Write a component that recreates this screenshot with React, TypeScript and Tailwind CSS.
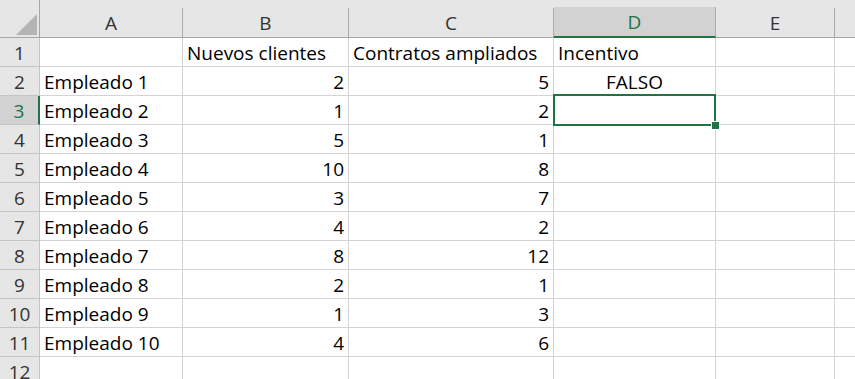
import React from "react";

const cols = [
  { name: "A", w: 143 },
  { name: "B", w: 166 },
  { name: "C", w: 205 },
  { name: "D", w: 162 },
  { name: "E", w: 119 },
  { name: "", w: 60 },
];

type Cell = { v: string; align: "l" | "r" | "c" };

const rows: Cell[][] = [
  [
    { v: "", align: "l" },
    { v: "Nuevos clientes", align: "l" },
    { v: "Contratos ampliados", align: "l" },
    { v: "Incentivo", align: "l" },
  ],
  [
    { v: "Empleado 1", align: "l" },
    { v: "2", align: "r" },
    { v: "5", align: "r" },
    { v: "FALSO", align: "c" },
  ],
  [
    { v: "Empleado 2", align: "l" },
    { v: "1", align: "r" },
    { v: "2", align: "r" },
  ],
  [
    { v: "Empleado 3", align: "l" },
    { v: "5", align: "r" },
    { v: "1", align: "r" },
  ],
  [
    { v: "Empleado 4", align: "l" },
    { v: "10", align: "r" },
    { v: "8", align: "r" },
  ],
  [
    { v: "Empleado 5", align: "l" },
    { v: "3", align: "r" },
    { v: "7", align: "r" },
  ],
  [
    { v: "Empleado 6", align: "l" },
    { v: "4", align: "r" },
    { v: "2", align: "r" },
  ],
  [
    { v: "Empleado 7", align: "l" },
    { v: "8", align: "r" },
    { v: "12", align: "r" },
  ],
  [
    { v: "Empleado 8", align: "l" },
    { v: "2", align: "r" },
    { v: "1", align: "r" },
  ],
  [
    { v: "Empleado 9", align: "l" },
    { v: "1", align: "r" },
    { v: "3", align: "r" },
  ],
  [
    { v: "Empleado 10", align: "l" },
    { v: "4", align: "r" },
    { v: "6", align: "r" },
  ],
  [],
];

const SEL_ROW = 2; // index -> row 3
const SEL_COL = 3; // D

export default function App() {
  return (
    <div
      className="w-[855px] h-[379px] overflow-hidden bg-white text-[19px] text-black"
      style={{ fontFamily: '"Open Sans", "Noto Sans", sans-serif' }}
    >
      {/* header row */}
      <div className="flex h-[38px] bg-[#e6e6e6] border-b border-[#a6a6a6]">
        <div className="w-[40px] shrink-0 border-r border-[#a6a6a6] relative">
          <svg className="absolute left-[16px] top-[14px]" width="22" height="22" viewBox="0 0 22 22">
            <polygon points="21,0 21,21 0,21" fill="#b4b4b4" />
          </svg>
        </div>
        {cols.map((c, i) => (
          <div key={i} className="shrink-0 flex flex-col" style={{ width: c.w }}>
            <div className="h-[10px]" />
            <div
              className={
                i === SEL_COL
                  ? "flex-1 flex items-center justify-center pt-[1px] bg-[#d2d2d2] border-r border-[#ababab] border-b-2 border-b-[#217346] text-[#217346] text-[19px] -mb-px"
                  : "flex-1 flex items-center justify-center pt-[1px] border-r border-[#ababab] text-[#333333] text-[19px]"
              }
            >
              {c.name}
            </div>
          </div>
        ))}
      </div>
      {rows.map((r, ri) => (
        <div key={ri} className="flex h-[29px]">
          <div
            className={
              ri === SEL_ROW
                ? "w-[40px] shrink-0 flex items-center justify-center pt-[2px] bg-[#d2d2d2] border-r-2 border-r-[#217346] border-b border-[#c4c4c4] text-[#217346] text-[19px]"
                : "w-[40px] shrink-0 flex items-center justify-center pt-[2px] bg-[#e6e6e6] border-r border-[#a6a6a6] border-b border-[#c4c4c4] text-[#333333] text-[19px]"
            }
          >
            {ri + 1}
          </div>
          {cols.map((c, ci) => {
            const cell = r[ci];
            const sel = ri === SEL_ROW && ci === SEL_COL;
            return (
              <div
                key={ci}
                className={
                  "shrink-0 relative flex items-center px-[4px] pt-[2px] border-r border-b border-[#d4d4d4] whitespace-nowrap " +
                  (cell?.align === "r"
                    ? "justify-end"
                    : cell?.align === "c"
                    ? "justify-center"
                    : "justify-start")
                }
                style={{ width: c.w }}
              >
                {cell?.v}
                {sel && (
                  <div className="absolute z-10 left-[-1px] top-[-2px] right-[-1px] bottom-[-2px] border-2 border-[#217346]">
                    <div className="absolute right-[-6px] bottom-[-6px] w-[9px] h-[9px] bg-[#217346] border-[1.5px] border-white" />
                  </div>
                )}
              </div>
            );
          })}
        </div>
      ))}
    </div>
  );
}
